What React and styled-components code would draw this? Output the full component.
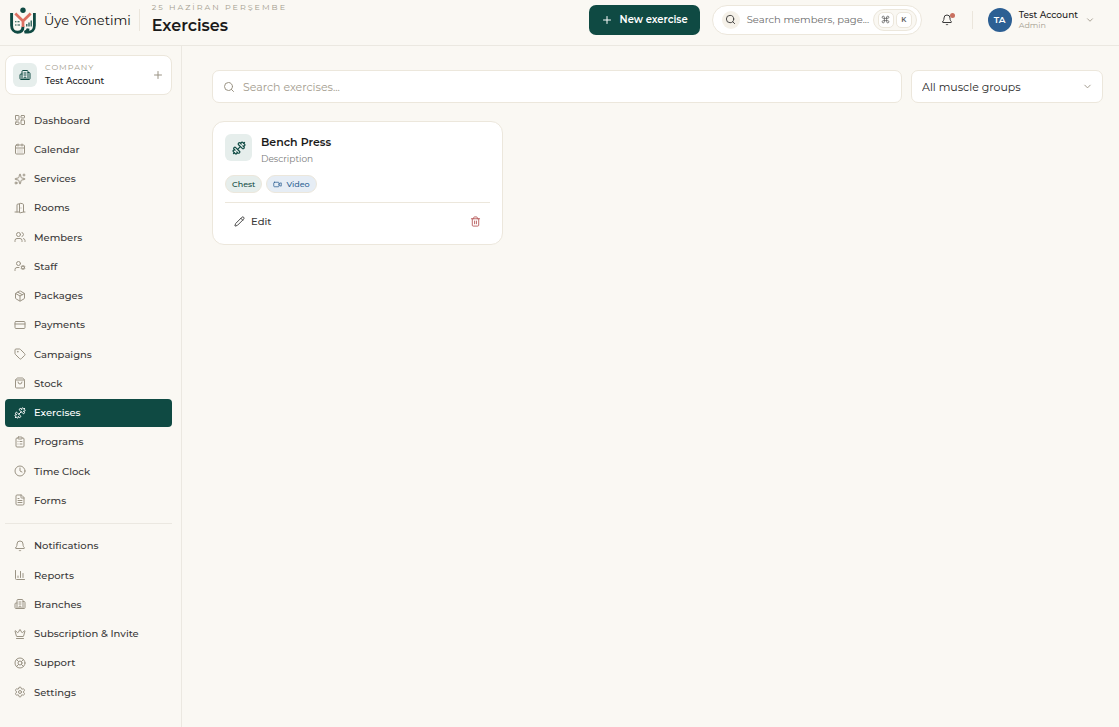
import React from 'react';
import styled, { createGlobalStyle, css } from 'styled-components';
import {
  LayoutDashboard, CalendarDays, Sparkles, DoorOpen, Users, UserCog, Package, CreditCard, Tag,
  ShoppingBag, Dumbbell, ClipboardList, Clock, FileText, Bell, ChartColumn, Building2, Crown,
  LifeBuoy, Settings, Plus, Search, ChevronDown, Video, Pencil, Trash2, Command,
} from 'lucide-react';

const GlobalStyle = createGlobalStyle`
  * {
    box-sizing: border-box;
  }

  body {
    margin: 0;
    background: #faf8f3;
    color: #1a1a1a;
    font-family: Montserrat, Inter, "Noto Sans", sans-serif;
    font-size: 10px;
  }

  button, input, select {
    font: inherit;
    color: inherit;
  }

  button {
    cursor: pointer;
  }
`;

// Sidebar links, the second group comes under the divider
const mainLinks = [
  { label: 'Dashboard', icon: LayoutDashboard },
  { label: 'Calendar', icon: CalendarDays },
  { label: 'Services', icon: Sparkles },
  { label: 'Rooms', icon: DoorOpen },
  { label: 'Members', icon: Users },
  { label: 'Staff', icon: UserCog },
  { label: 'Packages', icon: Package },
  { label: 'Payments', icon: CreditCard },
  { label: 'Campaigns', icon: Tag },
  { label: 'Stock', icon: ShoppingBag },
  { label: 'Exercises', icon: Dumbbell, active: true },
  { label: 'Programs', icon: ClipboardList },
  { label: 'Time Clock', icon: Clock },
  { label: 'Forms', icon: FileText },
];

const otherLinks = [
  { label: 'Notifications', icon: Bell },
  { label: 'Reports', icon: ChartColumn },
  { label: 'Branches', icon: Building2 },
  { label: 'Subscription & Invite', icon: Crown },
  { label: 'Support', icon: LifeBuoy },
  { label: 'Settings', icon: Settings },
];

function Logo() {
  return (
    <svg width="28" height="28" viewBox="0 0 28 28" fill="none" aria-hidden="true">
      <path d="M2.600 7V19.500c0 4 2.700 6.700 6 6.700s5.400-2.200 5.400-5.700" stroke="#0f4a43" strokeWidth="2.900" />
      <path d="M25.400 7V19.500c0 4.300-2.800 6.700-6.300 6.700h-3.500c2.200-1 3.400-2.300 3.600-3.700" stroke="#0f4a43" strokeWidth="2.800" />
      <path d="M6.300 7.500L14 15 21.700 7.500M14 14.500v6.500" stroke="#dd7163" strokeWidth="2.700" />
      <circle cx="14" cy="4.300" r="2.700" fill="#0f4a43" />
      <path d="M6 15.800h1.500M8.500 15.800h2M6 19h1.500M8.500 19h2.500" stroke="#0f4a43" strokeWidth="1.100" />
      <path d="M17.800 20.500v-2.500M20 20.500v-4M22.200 20.500v-6" stroke="#0f4a43" strokeWidth="1.200" />
    </svg>
  );
}

function NavItem({ item }) {
  const Icon = item.icon;
  return (
    <NavLink href="#" $active={item.active}>
      <Icon size={12} strokeWidth={2} />
      {item.label}
    </NavLink>
  );
}

function App() {
  return (
    <>
      <GlobalStyle />
      <Header>
        <Brand href="#">
          <Logo />
          Üye Yönetimi
        </Brand>
        <Separator />
        <Heading>
          <DateLine>25 HAZİRAN PERŞEMBE</DateLine>
          <Title>Exercises</Title>
        </Heading>
        <PrimaryButton>
          <Plus size={12} />
          New exercise
        </PrimaryButton>
        <GlobalSearch>
          <SearchBadge><Search size={11} /></SearchBadge>
          Search members, page...
          <Keys>
            <Key><Command size={9} /></Key>
            <Key>K</Key>
          </Keys>
        </GlobalSearch>
        <BellButton aria-label="Notifications">
          <Bell size={12} />
          <Dot />
        </BellButton>
        <Separator $short />
        <Account>
          <Avatar>TA</Avatar>
          <AccountText>
            <AccountName>Test Account</AccountName>
            <Role>Admin</Role>
          </AccountText>
          <ChevronDown size={10} color="#9a9384" />
        </Account>
      </Header>
      <Body>
        <Sidebar>
          <Company>
            <CompanyIcon><Building2 size={12} /></CompanyIcon>
            <CompanyText>
              <CompanyLabel>COMPANY</CompanyLabel>
              <CompanyName>Test Account</CompanyName>
            </CompanyText>
            <Plus size={12} color="#9a9384" />
          </Company>
          <Nav>
            {mainLinks.map((item) => <NavItem key={item.label} item={item} />)}
            <Divider />
            {otherLinks.map((item) => <NavItem key={item.label} item={item} />)}
          </Nav>
        </Sidebar>
        <Main>
          <Filters>
            <SearchField>
              <Search size={12} />
              <SearchInput type="search" aria-label="Search exercises" placeholder="Search exercises..." />
            </SearchField>
            <SelectField>
              <Select aria-label="Muscle group">
                <option>All muscle groups</option>
              </Select>
              <ChevronDown size={11} />
            </SelectField>
          </Filters>
          <Cards>
            <Card>
              <CardTop>
                <CardIcon><Dumbbell size={14} /></CardIcon>
                <div>
                  <CardTitle>Bench Press</CardTitle>
                  <CardText>Description</CardText>
                </div>
              </CardTop>
              <Tags>
                <Chip>Chest</Chip>
                <Chip $blue><Video size={9} />Video</Chip>
              </Tags>
              <CardActions>
                <EditButton><Pencil size={11} />Edit</EditButton>
                <DeleteButton aria-label="Delete"><Trash2 size={11} /></DeleteButton>
              </CardActions>
            </Card>
          </Cards>
        </Main>
      </Body>
    </>
  );
}

const Header = styled.header`
  display: flex;
  align-items: center;
  height: 46px;
  padding: 0 24px 6px 9px;
  border-bottom: 1px solid #ebe8e1;
`;

const Brand = styled.a`
  display: flex;
  align-items: center;
  gap: 7px;
  color: #111;
  font-size: 13px;
  text-decoration: none;
`;

const Separator = styled.span`
  width: 1px;
  height: ${({ $short }) => ($short ? '18px' : '22px')};
  margin: ${({ $short }) => ($short ? '0 15px 0 19px' : '0 12px 0 8px')};
  background: #ebe6dc;
`;

const Heading = styled.div`
  flex: 1;
  padding-top: 2px;
`;

const DateLine = styled.div`
  color: #a39c8e;
  font-size: 8px;
  letter-spacing: 2px;
  line-height: 10px;
`;

const Title = styled.h1`
  margin: 0;
  font-size: 16px;
  font-weight: 600;
  line-height: 28px;
`;

const PrimaryButton = styled.button`
  display: flex;
  align-items: center;
  gap: 7px;
  height: 30px;
  margin-right: 12px;
  padding: 0 12px;
  border: 0;
  border-radius: 7px;
  background: #0f4a43;
  color: #fff;
  font-weight: 600;
`;

const GlobalSearch = styled.button`
  display: flex;
  align-items: center;
  width: 210px;
  height: 30px;
  padding: 0 4px 0 9px;
  border: 1px solid #ece7dc;
  border-radius: 15px;
  background: #fff;
  color: #6b6b6b;
  white-space: nowrap;
`;

const SearchBadge = styled.span`
  display: grid;
  place-items: center;
  width: 18px;
  height: 18px;
  margin-right: 7px;
  border-radius: 50%;
  background: #f5f1e9;
  color: #3a3a3a;
`;

const Keys = styled.span`
  display: flex;
  gap: 2px;
  margin-left: auto;
  padding: 2px 4px;
  border: 1px solid #ece7dc;
  border-radius: 12px;
  background: #faf8f3;
`;

const Key = styled.kbd`
  display: grid;
  place-items: center;
  width: 16px;
  height: 16px;
  border: 1px solid #ece7dc;
  border-radius: 5px;
  background: #fff;
  color: #5c5c5c;
  font-family: inherit;
  font-size: 7px;
  font-weight: 600;
`;

const BellButton = styled.button`
  position: relative;
  display: flex;
  margin-left: 19px;
  padding: 0;
  border: 0;
  background: none;
  color: #3a3a3a;
`;

const Dot = styled.span`
  position: absolute;
  top: -1px;
  right: -2px;
  width: 5px;
  height: 5px;
  border-radius: 50%;
  background: #c9705f;
`;

const Account = styled.button`
  display: flex;
  align-items: center;
  padding: 0;
  border: 0;
  background: none;
  text-align: left;
`;

const Avatar = styled.span`
  display: grid;
  place-items: center;
  width: 24px;
  height: 24px;
  margin-right: 7px;
  border-radius: 50%;
  background: #2c5f93;
  color: #fff;
  font-size: 9px;
  font-weight: 600;
`;

const AccountText = styled.span`
  display: flex;
  flex-direction: column;
  margin-right: 7px;
  line-height: 11px;
`;

const AccountName = styled.span`
  font-size: 9px;
  font-weight: 500;
`;

const Role = styled.span`
  color: #a39c8e;
  font-size: 8px;
`;

const Body = styled.div`
  display: flex;
  min-height: calc(100vh - 46px);
`;

const Sidebar = styled.aside`
  display: flex;
  flex-direction: column;
  width: 182px;
  padding: 9px 9px 21px 5px;
  border-right: 1px solid #ebe8e1;
`;

const Company = styled.button`
  display: flex;
  align-items: center;
  gap: 8px;
  height: 40px;
  margin-bottom: 11px;
  padding: 0 7px;
  border: 1px solid #ece7dc;
  border-radius: 8px;
  background: #fff;
  text-align: left;
`;

const iconTile = css`
  display: grid;
  place-items: center;
  border-radius: 6px;
  background: #e6eeec;
  color: #0f4a43;
`;

const CompanyIcon = styled.span`
  ${iconTile}
  width: 24px;
  height: 24px;
`;

const CompanyText = styled.span`
  display: flex;
  flex: 1;
  flex-direction: column;
  padding-bottom: 2px;
  line-height: 13px;
`;

const CompanyLabel = styled.span`
  color: #a39c8e;
  font-size: 8px;
  letter-spacing: 1px;
`;

const CompanyName = styled.span`
  font-size: 9px;
  font-weight: 500;
`;

const Nav = styled.nav`
  display: flex;
  flex: 1;
  flex-direction: column;
  justify-content: space-between;
`;

const NavLink = styled.a`
  display: flex;
  align-items: center;
  gap: 8px;
  height: 28px;
  padding: 0 9px;
  border-radius: 4px;
  color: #3a3a3a;
  font-weight: 500;
  text-decoration: none;

  & svg {
    color: #9a9384;
  }

  ${({ $active }) => $active && css`
    background: #0f4a43;
    color: #fff;

    & svg {
      color: #fff;
    }
  `}
`;

const Divider = styled.hr`
  width: 100%;
  margin: 7px 0;
  border: 0;
  border-top: 1px solid #ebe8e1;
`;

const Main = styled.main`
  flex: 1;
  padding: 24px 16px 24px 30px;
`;

const Filters = styled.div`
  display: flex;
  gap: 9px;
  margin-bottom: 18px;
`;

const field = css`
  display: flex;
  align-items: center;
  height: 33px;
  border: 1px solid #ece7dc;
  border-radius: 7px;
  background: #fff;
  color: #9a9384;
`;

const SearchField = styled.label`
  ${field}
  flex: 1;
  gap: 8px;
  padding: 0 10px;
`;

const SearchInput = styled.input`
  flex: 1;
  padding: 0;
  border: 0;
  outline: 0;
  background: none;
  font-size: 11px;

  &::placeholder {
    color: #a39c8e;
  }
`;

const SelectField = styled.div`
  ${field}
  width: 192px;
  padding: 0 9px 0 10px;
`;

const Select = styled.select`
  flex: 1;
  padding: 0;
  border: 0;
  outline: 0;
  appearance: none;
  background: none;
  color: #2a2a2a;
  font-size: 11px;
`;

const Cards = styled.div`
  display: grid;
  grid-template-columns: repeat(3, 1fr);
  gap: 9px;
`;

const Card = styled.article`
  padding: 12px 12px 10px;
  border: 1px solid #ece7dc;
  border-radius: 12px;
  background: #fff;
`;

const CardTop = styled.div`
  display: flex;
  gap: 9px;
`;

const CardIcon = styled.span`
  ${iconTile}
  width: 27px;
  height: 27px;
`;

const CardTitle = styled.h2`
  margin: 0;
  font-size: 11px;
  font-weight: 600;
  line-height: 17px;
`;

const CardText = styled.p`
  margin: 0;
  color: #7a7a7a;
  font-size: 9px;
  line-height: 16px;
`;

const Tags = styled.div`
  display: flex;
  gap: 4px;
  margin: 8px 0 9px;
`;

const Chip = styled.span`
  display: flex;
  align-items: center;
  gap: 4px;
  height: 18px;
  padding: 0 6px;
  border: 1px solid #ece7dc;
  border-radius: 9px;
  background: ${({ $blue }) => ($blue ? '#e6edf5' : '#e6eeec')};
  color: ${({ $blue }) => ($blue ? '#2c5f93' : '#0f4a43')};
  font-size: 8px;
  font-weight: 500;
`;

const CardActions = styled.div`
  display: flex;
  justify-content: space-between;
  padding: 5px 9px 0;
  border-top: 1px solid #ece7dc;
`;

const EditButton = styled.button`
  display: flex;
  align-items: center;
  gap: 6px;
  height: 26px;
  padding: 0;
  border: 0;
  background: none;
  color: #3a3a3a;
  font-weight: 500;
`;

const DeleteButton = styled(EditButton)`
  color: #b85c5c;
`;

export default App;
